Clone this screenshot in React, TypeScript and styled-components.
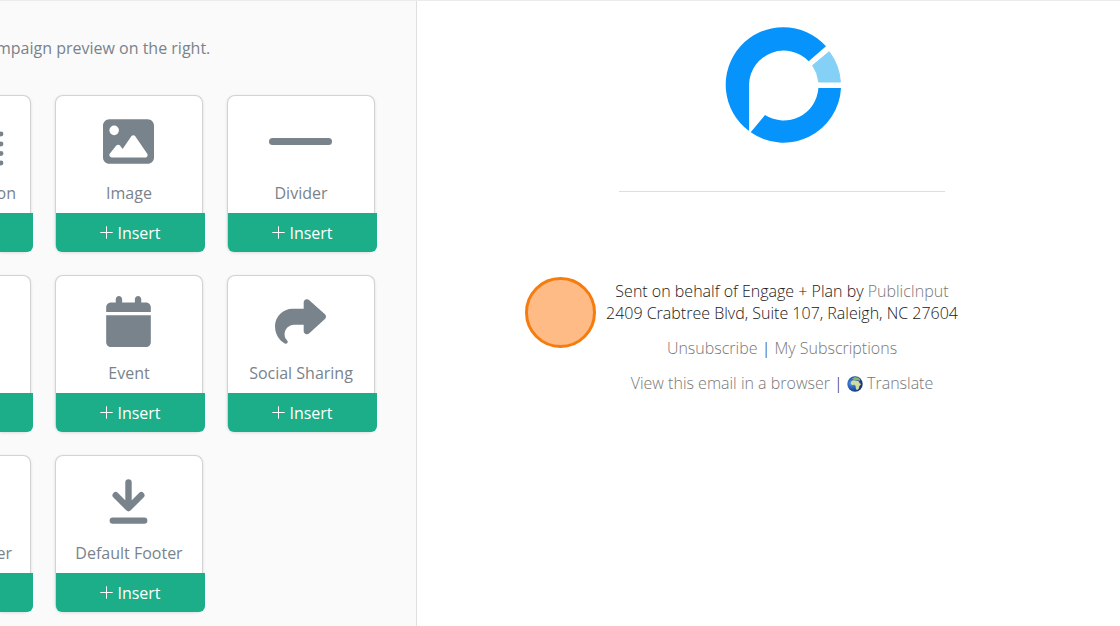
import React from "react";
import styled, { createGlobalStyle } from "styled-components";

const GlobalStyle = createGlobalStyle`
  *, *::before, *::after { box-sizing: border-box; }
  body { margin: 0; background: #fff; font-family: "Open Sans", "Noto Sans", sans-serif; font-size: 16px; }
`;

const Page = styled.div`
  display: flex;
  min-height: 100vh;
  border-top: 1px solid #ebebeb;
`;

const Sidebar = styled.aside`
  flex: 0 0 auto;
  padding: 35px 40px 14px 0;
  background: #fafafa;
  border-right: 1px solid #e0e0e0;
  color: #79838b;
`;

const Intro = styled.p`
  margin: 0 0 35px -4px;
  line-height: 24px;
  white-space: nowrap;
`;

const Grid = styled.div`
  display: grid;
  grid-template-columns: 32px 149px 149px;
  gap: 23px;
`;

const Card = styled.section<{ $edge?: boolean }>`
  display: flex;
  flex-direction: column;
  width: calc(100% - 1px);
  height: 157px;
  background: #fff;
  border: 1px solid #d2d2d2;
  border-bottom: 0;
  border-left-width: ${(p) => (p.$edge ? "0" : "1px")};
  border-radius: ${(p) => (p.$edge ? "0 8px 8px 0" : "8px")};
  box-shadow: 0 1px 3px rgba(0, 0, 0, 0.12);
`;

const IconArea = styled.div<{ $edge?: boolean }>`
  display: flex;
  flex: 1;
  align-items: center;
  justify-content: ${(p) => (p.$edge ? "flex-start" : "center")};
  padding: ${(p) => (p.$edge ? "20px 0 0" : "6px 1px 0 0")};
`;

const Label = styled.h2<{ $inset?: number }>`
  margin: 0 0 8px;
  padding-right: ${(p) => p.$inset ?? 0}px;
  font-size: 16px;
  font-weight: 400;
  line-height: 24px;
  display: flex;
  justify-content: ${(p) => (p.$inset ? "flex-end" : "center")};
`;

const InsertButton = styled.button<{ $edge?: boolean }>`
  display: flex;
  flex: 0 0 39px;
  align-items: center;
  justify-content: center;
  gap: 4px;
  width: calc(100% + 3px);
  padding: 0;
  border: 0;
  border-radius: ${(p) => (p.$edge ? "0 0 6px 0" : "0 0 6px 6px")};
  background: #1bae88;
  color: #fff;
  font: inherit;
  cursor: pointer;
`;

const Preview = styled.main`
  display: flex;
  flex: 1;
  flex-direction: column;
  align-items: center;
  padding: 26px 20px 0 47px;
  color: #202020;
`;

const Rule = styled.hr`
  width: 326px;
  margin: 48px 0 88px;
  border: 0;
  border-top: 1px solid #dedede;
`;

const Footer = styled.footer`
  position: relative;
  font-size: 16px;
  font-weight: 300;
  line-height: 22px;
  text-align: center;
  white-space: nowrap;
`;

const Line = styled.p`
  margin: 0 0 13px;
`;

const Link = styled.a`
  color: #777;
  text-decoration: none;
`;

const Marker = styled.span`
  position: absolute;
  top: -3px;
  right: calc(100% + 10px);
  width: 71px;
  height: 71px;
  border: 3px solid #f57c0f;
  border-radius: 50%;
  background: #ffbb86;
`;

const GlobeSvg = styled.svg`
  vertical-align: -3px;
`;

const ICON = "#79838b";

const PlusIcon = () => (
  <svg width="13" height="13" viewBox="0 0 13 13" fill="none" stroke="#fff" strokeLinecap="round" aria-hidden="true">
    <path d="M6.5 .7V12.3M.7 6.5H12.3" />
  </svg>
);

const DotsIcon = () => (
  <svg width="4" height="36" viewBox="0 0 4 36" fill={ICON} aria-hidden="true">
    <circle cx="1" cy="3" r="2.4" />
    <circle cx="1" cy="13" r="2.4" />
    <circle cx="1" cy="22.5" r="2.4" />
    <circle cx="1" cy="32" r="2.4" />
  </svg>
);

const ImageIcon = () => (
  <svg width="51" height="45" viewBox="0 0 512 448" fill={ICON} aria-hidden="true">
    <path
      fillRule="evenodd"
      d="M64 0C29 0 0 29 0 64V384c0 35 29 64 64 64H448c35 0 64-29 64-64V64c0-35-29-64-64-64zM324 170.500 444 346.500c5 7.300 5.600 16.800 1.400 24.600S432.900 384 424 384H88c-9.200 0-17.600-5.300-21.600-13.600s-2.900-18.200 2.900-25.400l64-80c4.600-5.700 11.400-9 18.700-9s14.200 3.300 18.700 9l26.500 33.100 87-127.600c4.500-6.600 11.900-10.500 19.800-10.500s15.300 3.900 19.800 10.500zM112 64a48 48 0 1 1 0 96 48 48 0 1 1 0-96z"
    />
  </svg>
);

const DividerIcon = () => (
  <svg width="63" height="7" viewBox="0 0 63 7" aria-hidden="true">
    <rect width="63" height="7" rx="3.500" fill={ICON} />
  </svg>
);

const EventIcon = () => (
  <svg width="45" height="51" viewBox="0 0 448 512" fill={ICON} aria-hidden="true">
    <path d="M96 32V64H48C21.500 64 0 85.500 0 112v48H448V112c0-26.500-21.500-48-48-48H352V32c0-17.700-14.300-32-32-32s-32 14.300-32 32V64H160V32c0-17.700-14.300-32-32-32S96 14.300 96 32zM448 192H0V464c0 26.500 21.500 48 48 48H400c26.500 0 48-21.500 48-48V192z" />
  </svg>
);

const ShareIcon = () => (
  <svg width="51" height="51" viewBox="0 0 512 512" fill={ICON} aria-hidden="true">
    <path d="M307 34.800c-11.500 5.100-19 16.600-19 29.200v64H176C78.800 128 0 206.800 0 304C0 417.300 81.500 467.900 100.200 478.100c2.500 1.400 5.300 1.900 8.100 1.900c10.900 0 19.700-8.900 19.700-19.700c0-7.500-4.300-14.400-9.800-19.500C108.800 431.900 96 414.400 96 384c0-53 43-96 96-96h96v64c0 12.600 7.400 24.100 19 29.200s25 3 34.400-5.400l160-144c6.700-6.100 10.600-14.700 10.600-23.800s-3.800-17.700-10.600-23.800l-160-144c-9.400-8.500-22.900-10.600-34.400-5.400z" />
  </svg>
);

const DownIcon = () => (
  <svg width="39" height="45" viewBox="0 0 39 45" fill="none" stroke={ICON} strokeWidth="6.400" strokeLinecap="round" strokeLinejoin="round" aria-hidden="true">
    <path d="M19.500 3.400V28.500M6.700 16.200 19.500 29 32.300 16.200M3.800 41.600H35.200" />
  </svg>
);

const Logo = () => (
  <svg width="120" height="116" viewBox="-4 0 120 116" role="img" aria-label="PublicInput">
    <path fill="#0693fb" d="M23.100 104A57.500 57.500 0 1 1 100 19.300L82.700 34.200A34.700 34.700 0 0 0 23.100 57z" />
    <path fill="#0693fb" d="M115 61A57.500 57.500 0 0 1 24.700 105.300L39 88A34.700 34.700 0 0 0 92.400 61z" />
    <path fill="#84d0f7" stroke="#84d0f7" strokeLinejoin="round" strokeWidth="1" d="M103.200 24.700A57 57 0 0 1 114.400 55H92.700A35 35 0 0 0 86.600 38.400z" />
  </svg>
);

const Globe = () => (
  <GlobeSvg width="16" height="16" viewBox="0 0 16 16" aria-hidden="true">
    <defs>
      <radialGradient id="sea" cx=".3" cy=".45" r=".7">
        <stop offset="0" stopColor="#5b9ae0" />
        <stop offset=".5" stopColor="#2459b4" />
        <stop offset="1" stopColor="#14306e" />
      </radialGradient>
    </defs>
    <circle cx="8" cy="8" r="7.700" fill="url(#sea)" />
    <path fill="#d3dca0" d="M4.200 5.500 6 4.200l2.600.3L11.400 5l1.500 2.400 1.300.5-1.800 2.200-.7 2.600-1.700 1.600-1.200-1.900-.2-2.300-1.100-1.300-2.600.1-1.200-1.600z" />
    <path fill="#8db56a" d="M5 2.600 8 1l3.400.7 2.200 2.300-1 .7-2.400-.8-2.400.2-1.700-.5z" />
  </GlobeSvg>
);

type Item = { label?: string; icon?: React.ReactNode; edge?: boolean; inset?: number };

const items: Item[] = [
  { label: "on", icon: <DotsIcon />, edge: true, inset: 14 },
  { label: "Image", icon: <ImageIcon /> },
  { label: "Divider", icon: <DividerIcon /> },
  { edge: true },
  { label: "Event", icon: <EventIcon /> },
  { label: "Social Sharing", icon: <ShareIcon /> },
  { label: "er", edge: true, inset: 18 },
  { label: "Default Footer", icon: <DownIcon /> },
];

export default function App() {
  return (
    <>
      <GlobalStyle />
      <Page>
        <Sidebar>
          <Intro>mpaign preview on the right.</Intro>
          <Grid>
            {items.map(({ label, icon, edge, inset }, i) => (
              <Card key={i} $edge={edge}>
                <IconArea $edge={edge}>{icon}</IconArea>
                {label && <Label $inset={inset}>{label}</Label>}
                <InsertButton type="button" $edge={edge} aria-label={edge ? "Insert" : undefined}>
                  {!edge && (
                    <>
                      <PlusIcon />
                      Insert
                    </>
                  )}
                </InsertButton>
              </Card>
            ))}
          </Grid>
        </Sidebar>
        <Preview>
          <Logo />
          <Rule />
          <Footer>
            <Marker />
            <Line>
              Sent on behalf of Engage + Plan by <Link href="#publicinput">PublicInput</Link>
              <br />
              2409 Crabtree Blvd, Suite 107, Raleigh, NC 27604
            </Line>
            <Line>
              <Link href="#unsubscribe">Unsubscribe</Link> | <Link href="#subscriptions">My Subscriptions</Link>
            </Line>
            <Line>
              <Link href="#browser">View this email in a browser</Link> | <Globe /> <Link href="#translate">Translate</Link>
            </Line>
          </Footer>
        </Preview>
      </Page>
    </>
  );
}
